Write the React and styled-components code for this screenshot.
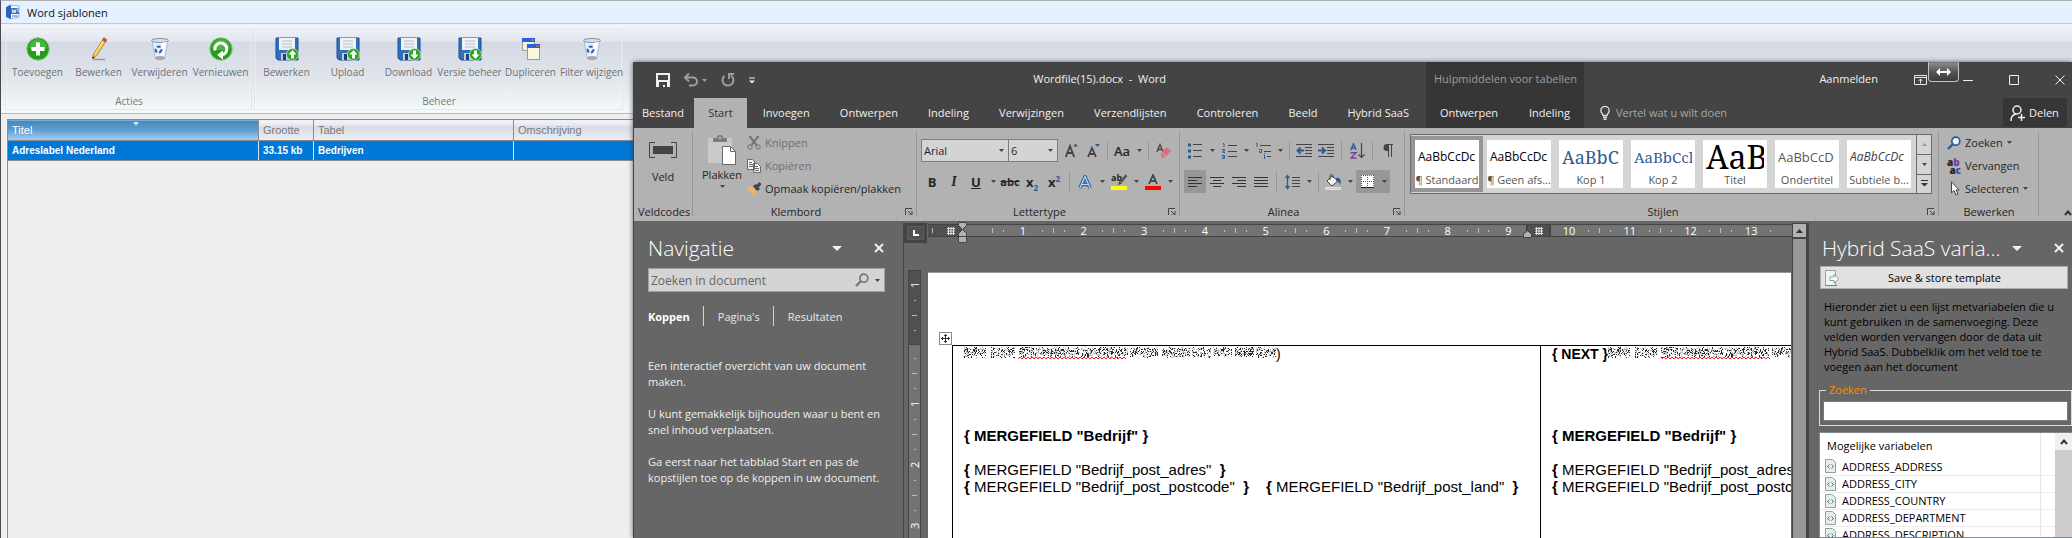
import React from 'react';
import styled, { createGlobalStyle, css } from 'styled-components';

const UI = '"Open Sans", "Noto Sans", sans-serif';
const ARIAL = '"Liberation Sans", Arial, sans-serif';

const Global = createGlobalStyle`
  *, *::before, *::after { box-sizing: border-box; }
  html, body { margin: 0; height: 100%; }
  body { overflow: hidden; background: #efefef; font-family: ${UI}; font-size: 11px; }
  #root { height: 100%; }
  button, input, select { font: inherit; color: inherit; margin: 0; padding: 0; border: 0; background: none; border-radius: 0; }
  p, h1, h2, ul { margin: 0; padding: 0; }
  svg { display: block; flex: none; }
`;

/* ---------- template manager (background application) ---------- */

const Desktop = styled.div`
  position: relative;
  height: 100%;
  overflow: hidden;
`;

const Manager = styled.main`
  display: flex;
  flex-direction: column;
  height: 100%;
  border-left: 1px solid #4a4a4c;
  border-top: 1px solid #b0b0b2;
`;

const ManagerTitle = styled.header`
  display: flex;
  align-items: center;
  gap: 6px;
  height: 23px;
  padding-left: 4px;
  background: #e6f1ff;
  border-bottom: 1px solid #c3c6cb;
  color: #111;
  h1 { font-size: 11px; font-weight: 400; }
`;

const ManagerToolbar = styled.div`
  display: flex;
  gap: 2px;
  height: 90px;
  padding: 5px 4px 3px;
  background: linear-gradient(#f3f4fa 0, #e3e6ee 17px, #d4d9e5 18px, #dfe3ea 50px, #f4faf9 88px);
  border-bottom: 1px solid #b9bcbe;
`;

const ToolGroup = styled.section`
  display: flex;
  flex-direction: column;
  justify-content: space-between;
  padding: 7px 0 0 1px;
  border: 1px solid #e4e5e8;
  box-shadow: inset 0 0 0 1px rgba(255, 255, 255, .25);
  h2 { font-size: 10px; line-height: 16px; font-weight: 400; color: #77797c; text-align: center; }
`;

const ToolRow = styled.div`
  display: flex;
`;

const ToolButton = styled.button`
  display: flex;
  flex-direction: column;
  align-items: center;
  gap: 4px;
  width: 61px;
  font-size: 10px;
  line-height: 14px;
  color: #6f7174;
  white-space: nowrap;
`;

const TemplateTable = styled.table`
  margin: 5px 0 0 6px;
  border-collapse: collapse;
  table-layout: fixed;
  width: 100%;
  font-family: ${ARIAL};
  font-size: 11px;
  text-align: left;
  white-space: nowrap;
  th {
    position: relative;
    height: 21px;
    padding: 0 4px;
    border: 1px solid #8b8b8d;
    background: linear-gradient(#f4f5f8 0, #e6e8ef 5px, #d7dbe5 6px, #eceef0 100%);
    color: #77797c;
    font-weight: 400;
  }
  th[aria-sort] {
    background: linear-gradient(#4586ba, #5f9fd2 50%, #a9d2f6);
    color: #fff;
  }
  td {
    height: 20px;
    padding: 0 4px;
    border: 1px solid #8b8b8d;
    border-right-color: #d8e6f4;
    background: #0078d7;
    color: #fff;
    font-size: 10px;
    font-weight: 700;
  }
`;

const SortMark = styled.span`
  position: absolute;
  left: 50%;
  top: 2px;
  border: 3px solid transparent;
  border-top: 4px solid #c7e4f2;
  border-bottom: 0;
`;

const GridBody = styled.div`
  flex: 1;
  margin-left: 6px;
  border-left: 1px solid #8b8b8d;
`;

/* ---------- word window ---------- */

const WordWindow = styled.div`
  position: absolute;
  left: 633px;
  right: 0;
  top: 62px;
  bottom: 0;
  display: flex;
  flex-direction: column;
  background: #666;
  border-left: 1px solid #444;
  box-shadow: 0 0 5px rgba(40, 44, 60, .75);
`;

const WordHeader = styled.header`
  display: grid;
  grid-template-columns: 792px 158px 1fr;
  height: 66px;
  background: #444;
  color: #f0f0f0;
`;

const HeaderColumn = styled.div`
  display: grid;
  grid-template-rows: 36px 30px;
  grid-template-columns: minmax(0, 1fr);
  background: ${p => (p.$context ? '#363636' : 'none')};
`;

const TitleRow = styled.div`
  position: relative;
  display: flex;
  align-items: center;
  padding: ${p => p.$pad || '0'};
  color: ${p => (p.$muted ? '#9d9d9d' : '#f0f0f0')};
  font-size: 11px;
  white-space: pre;
`;

const QuickAccess = styled.div`
  display: flex;
  align-items: center;
  gap: 14px;
`;

const PlainButton = styled.button`
  display: flex;
  align-items: center;
  gap: 4px;
`;

const DocTitle = styled.h1`
  margin: 0 260px 0 auto;
  padding-bottom: 3px;
  font-size: 11px;
  font-weight: 400;
`;

const SignIn = styled.button`
  margin: 0 36px 0 auto;
  padding-bottom: 3px;
`;

const WindowButtons = styled.div`
  display: flex;
  align-items: center;
  gap: 36px;
  margin-left: 36px;
`;

const DragBadge = styled.span`
  position: absolute;
  left: 344px;
  top: 0;
  display: flex;
  align-items: center;
  justify-content: center;
  width: 31px;
  height: 20px;
  border: 1px solid #c4c4c4;
  border-top-color: #777;
  border-radius: 0 0 4px 4px;
  background: linear-gradient(#8a8a8a, #555 50%, #3c3c3c);
`;

const TabRow = styled.nav`
  display: flex;
  align-items: stretch;
  justify-content: space-between;
  padding: ${p => p.$pad || '0'};
`;

const Tab = styled.button`
  padding: 0 ${p => (p.$file ? 8 : 14)}px 1px;
  background: ${p => (p.$active ? '#b2b2b2' : 'none')};
  color: ${p => (p.$active ? '#333' : '#f0f0f0')};
  white-space: nowrap;
`;

const TellMe = styled.button`
  display: flex;
  align-items: center;
  gap: 6px;
  color: #a8a8a8;
`;

const Share = styled.button`
  display: flex;
  align-items: center;
  gap: 4px;
  width: 64px;
  padding-left: 7px;
  background: #363636;
`;

const Ribbon = styled.div`
  display: flex;
  height: 93px;
  background: #b2b2b2;
  color: #262626;
`;

const groupWidths = { fields: 59, clip: 224, font: 263, para: 225, edit: 100 };

const Group = styled.section`
  position: relative;
  display: flex;
  flex-direction: column;
  flex: ${p => (p.$size ? `0 0 ${groupWidths[p.$size]}px` : '1 1 0')};
  min-width: 0;
  padding: 3px 4px 0;
  &::after {
    content: '';
    position: absolute;
    right: 0;
    top: 4px;
    bottom: 5px;
    width: 1px;
    background: #979797;
  }
`;

const GroupBody = styled.div`
  flex: 1;
  display: flex;
  flex-direction: ${p => (p.$column ? 'column' : 'row')};
`;

const GroupFooter = styled.div`
  display: flex;
  align-items: center;
  height: 18px;
  margin-bottom: 1px;
  h2 {
    flex: 1;
    padding-right: ${p => (p.$launcher ? 10 : 0)}px;
    font-size: 11px;
    font-weight: 400;
    text-align: center;
    white-space: nowrap;
  }
`;

const BigButton = styled.button`
  display: flex;
  flex-direction: column;
  align-items: center;
  gap: ${p => (p.$tall ? 2 : 11)}px;
  padding-top: ${p => (p.$tall ? 4 : 11)}px;
  width: 50px;
  font-size: 11px;
  line-height: 16px;
`;

const ItemList = styled.ul`
  display: flex;
  flex-direction: column;
  list-style: none;
  padding-left: ${p => (p.$inset ? 4 : 0)}px;
`;

const Item = styled.button`
  display: flex;
  align-items: center;
  gap: 4px;
  height: 23px;
  font-size: 11px;
  white-space: nowrap;
  color: ${p => (p.$off ? '#6f6f6f' : '#262626')};
`;

const ToolLine = styled.div`
  display: flex;
  align-items: center;
  height: 23px;
  margin-top: 8px;
`;

const IconButton = styled.button`
  display: flex;
  align-items: center;
  justify-content: center;
  width: ${p => (p.$drop ? 12 : 22)}px;
  height: 23px;
  background: ${p => (p.$on ? '#979797' : 'none')};
`;

const Letter = styled.span`
  font-size: ${p => (p.$large ? 14 : p.$small ? 11 : 13)}px;
  font-weight: ${p => (p.$medium ? 600 : 700)};
  ${p => p.$italic && css`font-style: italic; font-family: "Liberation Serif", serif;`}
  ${p => p.$line && css`text-decoration: ${p.$line};`}
  sub, sup { font-size: 8px; line-height: 0; color: #2a5d94; }
`;

const Sep = styled.span`
  width: 1px;
  height: 20px;
  margin: 0 ${p => (p.$tight ? 3 : 4)}px;
  background: #979797;
`;

const Combo = styled.label`
  position: relative;
  display: flex;
  align-items: center;
  width: ${p => (p.$short ? 50 : 88)}px;
  height: 23px;
  margin-right: ${p => (p.$short ? 2 : -1)}px;
  border: 1px solid #7d7d7d;
  background: #d4d4d4;
  select { appearance: none; width: 100%; height: 100%; padding-left: 2px; font-size: 11px; }
  svg { position: absolute; right: 4px; }
`;

const Gallery = styled.div`
  display: flex;
  flex: 1;
  height: 60px;
  margin: 3px 3px 0 1px;
  border: 1px solid #6b6b6b;
  background: #d4d4d4;
`;

const StyleTiles = styled.div`
  flex: 1;
  display: flex;
  min-width: 0;
  overflow: hidden;
`;

const StyleTile = styled.button`
  flex: none;
  display: flex;
  flex-direction: column;
  width: 72px;
  height: 56px;
  margin-top: 1px;
  border: 4px solid ${p => (p.$on ? '#969696' : 'transparent')};
  background: #fff;
  background-clip: padding-box;
  color: #555;
  font-size: 11px;
  small { font-size: 11px; line-height: 14px; align-self: center; white-space: nowrap; }
`;

const Sample = styled.span`
  display: flex;
  align-items: center;
  height: 33px;
  margin: 0 3px;
  overflow: hidden;
  white-space: nowrap;
  font-family: ${p => (p.$serif ? '"Noto Serif", "DejaVu Serif", "Liberation Serif", serif' : UI)};
  font-size: ${p => p.$px || 12}px;
  font-style: ${p => (p.$italic ? 'italic' : 'normal')};
  color: ${p => p.$color || '#000'};
`;

const GalleryButtons = styled.div`
  display: grid;
  grid-template-rows: 1fr 1fr 1fr;
  width: 15px;
  border-left: 1px solid #6b6b6b;
  button { display: flex; align-items: center; justify-content: center; }
  button + button { border-top: 1px solid #6b6b6b; }
`;

const Collapse = styled.button`
  display: flex;
  align-items: flex-end;
  justify-content: flex-end;
  width: 33px;
  padding-bottom: 5px;
  overflow: hidden;
`;

/* ---------- panes ---------- */

const Workspace = styled.div`
  flex: 1;
  display: flex;
  min-height: 0;
  padding-top: 2px;
`;

const NavPane = styled.aside`
  flex: 0 0 270px;
  padding: 12px 18px 0 14px;
  border-right: 1px solid #444;
  color: #f0f0f0;
`;

const PaneTitle = styled.header`
  display: flex;
  align-items: center;
  height: 26px;
  color: #fff;
  h2 { flex: 1; font-size: 21px; line-height: 26px; font-weight: 300; white-space: nowrap; }
  button { display: flex; justify-content: center; width: 12px; }
  button + button { margin-left: 30px; }
`;

const SearchBox = styled.form`
  display: flex;
  align-items: center;
  gap: 6px;
  height: 24px;
  margin-top: 7px;
  padding: 0 4px 0 2px;
  border: 1px solid #a2a2a2;
  background: #d4d4d4;
  input { flex: 1; min-width: 0; font-size: 12px; outline: 0; color: #666; }
  input::placeholder { color: #666; opacity: 1; }
`;

const NavTabs = styled.div`
  display: flex;
  align-items: center;
  margin-top: 14px;
  height: 20px;
`;

const NavTab = styled.button`
  height: 20px;
  padding: 0 13px 0 ${p => (p.$active ? 0 : 14)}px;
  font-size: 11px;
  font-weight: ${p => (p.$active ? 700 : 400)};
  color: ${p => (p.$active ? '#fff' : '#e8e8e8')};
  & + & { border-left: 1px solid #d4d4d4; }
`;

const NavHelp = styled.div`
  display: flex;
  flex-direction: column;
  gap: 16px;
  margin-top: 32px;
  font-size: 11px;
  line-height: 16px;
  white-space: pre;
`;

const Editor = styled.section`
  flex: 1;
  display: grid;
  grid-template-columns: 24px 1fr;
  grid-template-rows: 20px 1fr;
  min-width: 0;
`;

const RulerCorner = styled.button`
  display: flex;
  align-items: center;
  justify-content: center;
  align-self: start;
  width: 23px;
  height: 20px;
  background: #505050;
  border: 3px solid #444;
  outline: 1px solid #5c5c5c;
  outline-offset: -4px;
`;

const HRuler = styled.div`
  position: relative;
  display: flex;
  align-self: start;
  height: 13px;
  margin-top: 1px;
  border: 1px solid #444;
  border-width: 1px 0;
  background: #737373;
  color: #fff;
`;

const RulerMargin = styled.div`
  display: flex;
  align-items: center;
  justify-content: space-between;
  width: 34px;
  padding: 0 7px 0 4px;
  background: #505050;
`;

const RulerUnits = styled.div`
  flex: 1;
  display: grid;
  grid-template-columns: repeat(13, 1fr);
  padding: 0 11px 0 30px;
`;

const RulerUnit = styled.div`
  display: grid;
  grid-template-columns: 1px 1fr 1px 1fr 18px 1fr 1px 1fr;
  align-items: center;
  font-size: 11px;
  line-height: 11px;
  text-align: center;
`;

const Tick = styled.i`
  width: ${p => (p.$side ? (p.$long ? 5 : 2) : 1)}px;
  height: ${p => (p.$side ? 1 : p.$long ? 5 : 2)}px;
  background: #bdbdbd;
  grid-column: ${p => p.$col || 'auto'};
`;

const RulerNumber = styled.span`
  grid-column: 5;
`;

const ColumnMark = styled.div`
  position: absolute;
  left: 598px;
  top: 0;
  display: flex;
  align-items: center;
  justify-content: center;
  width: 25px;
  height: 11px;
  border: 2px solid #444;
  border-width: 0 2px;
  background: #505050;
`;

const IndentMark = styled.span`
  position: absolute;
  left: ${p => (p.$right ? 595 : 30)}px;
  top: ${p => (p.$right ? 5 : -3)}px;
`;

const VRuler = styled.div`
  justify-self: start;
  width: 13px;
  height: 100%;
  margin: 27px 0 0 4px;
  border: 1px solid #444;
  background: #737373;
  color: #fff;
`;

const VRulerPart = styled.div`
  display: flex;
  flex-direction: column;
  align-items: center;
  padding-top: 6px;
  ${p => p.$dark && css`
    padding-bottom: 6px;
    background: #505050;
    border-bottom: 1px solid #444;
  `}
`;

const VRulerStep = styled.span`
  display: flex;
  align-items: center;
  justify-content: center;
  width: 11px;
  height: ${p => (p.$number ? 16 : 15)}px;
  font-size: 11px;
  line-height: 11px;
  writing-mode: ${p => (p.$number ? 'vertical-rl' : 'horizontal-tb')};
  rotate: ${p => (p.$number ? '180deg' : '0deg')};
`;

const PageArea = styled.div`
  position: relative;
  margin: 29px 1px 0 0;
  min-width: 0;
  overflow: hidden;
  background: #fff;
  border-top: 1px solid #989898;
`;

const MergeTable = styled.table`
  margin: 72px 0 0 24px;
  border-collapse: collapse;
  table-layout: fixed;
  width: 1175px;
  height: 600px;
  color: #000;
  font-family: ${ARIAL};
  font-size: 15px;
  line-height: 17px;
  td {
    padding: 0 0 0 11px;
    border: 1px solid #000;
    vertical-align: top;
    white-space: pre;
  }
`;

const MoveHandle = styled.button`
  position: absolute;
  left: 11px;
  top: 59px;
  display: flex;
  align-items: center;
  justify-content: center;
  width: 13px;
  height: 13px;
  border: 1px solid #8a8a8a;
  background: #fff;
`;

const CodeLine = styled.p`
  display: flex;
  align-items: flex-start;
  gap: ${p => (p.$split ? 17 : 0)}px;
  height: 17px;
  margin-bottom: ${p => (p.$after || 0)}px;
  font-weight: ${p => (p.$bold ? 700 : 400)};
  font-size: ${p => (p.$code ? 14 : 15)}px;
`;

const VScroll = styled.div`
  flex: 0 0 16px;
  display: flex;
  flex-direction: column;
  border: 1px solid #444;
  border-width: 1px 2px 0 1px;
  background: #979797;
  button {
    display: flex;
    align-items: center;
    justify-content: center;
    height: 15px;
    background: #b2b2b2;
    border-bottom: 2px solid #444;
  }
`;

const VarPane = styled.aside`
  flex: 0 0 264px;
  display: flex;
  flex-direction: column;
  padding: 12px 0 0 10px;
  border-left: 1px solid #444;
`;

const VarTitle = styled(PaneTitle)`
  padding: 0 7px 0 3px;
`;

const SaveButton = styled.button`
  display: flex;
  align-items: center;
  height: 23px;
  margin: 5px 4px 0 1px;
  padding-left: 3px;
  border: 1px solid #adadad;
  background: #e1e1e1;
  color: #000;
  font-size: 11px;
  span { flex: 1; padding-right: 17px; text-align: center; }
`;

const VarText = styled.p`
  margin: 10px 0 0 5px;
  color: #000;
  font-size: 11px;
  line-height: 15px;
  white-space: pre;
`;

const SearchSet = styled.fieldset`
  height: 43px;
  margin: 9px 0 0;
  padding: 4px 3px 0;
  border: 1px solid #dcdcdc;
  min-width: 0;
  legend { margin-left: 3px; padding: 0 3px; color: #ff8c00; font-size: 11px; line-height: 14px; }
  input { display: block; width: 100%; height: 20px; border: 1px solid #7a7a7a; background: #fff; }
`;

const VarList = styled.div`
  flex: 1;
  display: flex;
  min-height: 0;
  margin-top: 6px;
  overflow: hidden;
  border: 1px solid #828790;
  border-right: 0;
  background: #fff;
  color: #000;
`;

const VarTable = styled.table`
  flex: 1;
  align-self: flex-start;
  border-collapse: collapse;
  table-layout: fixed;
  text-align: left;
  font-size: 11px;
  th { height: 25px; padding: 0 7px; font-weight: 400; }
  td { height: 17px; padding: 0 5px; border-bottom: 1px solid #ececec; }
  th:first-child, td:first-child { width: 222px; border-right: 1px solid #e5e5e5; }
`;

const VarName = styled.span`
  display: flex;
  align-items: center;
  gap: 6px;
  height: 16px;
`;

const ListScroll = styled.div`
  flex: 0 0 17px;
  background: #cdcdcd;
  button { display: flex; align-items: center; justify-content: center; width: 17px; height: 17px; background: #f0f0f0; }
`;

/* ---------- drawings ---------- */

const Svg = ({ w, h = w, children, ...rest }) => (
  <svg width={w} height={h} viewBox={`0 0 ${w} ${h}`} fill="none" aria-hidden="true" {...rest}>{children}</svg>
);

const Caret = ({ color = '#444', big }) => big
  ? <Svg w={10} h={5}><path d="M0 0h10L5 5z" fill={color} /></Svg>
  : <Svg w={5} h={3}><path d="M0 0h5L2.5 3z" fill={color} /></Svg>;

const WordIcon = () => (
  <Svg w={16}>
    <path d="M4 1l10 1v11l-10 2z" fill="#fafcff" stroke="#9fb6dd" />
    <path d="M1 3l5-2v14l-5-2z" fill="#2a63b8" />
    <path d="M6 4h8v6H6z" fill="#3c71c4" />
    <path d="M7 5l1 4 1-3 1 3 1-4M12 5h2M12 7h2" stroke="#fff" strokeWidth=".8" />
    <path d="M7 12h6" stroke="#3c71c4" />
  </Svg>
);

const Orb = ({ children }) => (
  <Svg w={24}>
    <circle cx="12" cy="12" r="11.2" fill="#249b1b" stroke="#8cc487" />
    <path d="M3 11a9 9 0 0 1 18 0c-5 3-13 3-18 0z" fill="#6cc85f" opacity=".55" />
    {children}
  </Svg>
);
const AddIcon = () => <Orb><path d="M12 5.500v13M5.500 12h13" stroke="#fff" strokeWidth="4" /></Orb>;
const RefreshIcon = () => (
  <Orb>
    <path d="M6 13.500a6 6 0 1 1 7.500 4.300" stroke="#fff" strokeWidth="3" />
    <path d="M14 13.500v9l-6-4.500z" fill="#fff" />
  </Orb>
);
const PencilIcon = () => (
  <Svg w={24}>
    <path d="M6 22.500h12" stroke="#999" strokeWidth="1.500" />
    <path d="M5.500 21.500l1-4.500L15.500 3l3 2-9 14z" fill="#f5c93a" stroke="#a9812a" strokeWidth=".8" />
    <path d="M8 17l8.300-13" stroke="#fff0a0" />
    <path d="M15.500 3l1.300-2.300 3 2L18.500 5z" fill="#c8574a" stroke="#8d3a33" strokeWidth=".6" />
    <path d="M5.300 22l.5-2.500 2 1z" fill="#222" />
  </Svg>
);
const BinIcon = () => (
  <Svg w={24}>
    <path d="M4 3h16l-3 17c-1 3-9 3-10 0z" fill="#e9f0f8" stroke="#b3c0cd" />
    <ellipse cx="12" cy="3.500" rx="8.500" ry="2" fill="#d6dfe8" stroke="#8796a6" />
    <path d="M14 6l4-1-3 15-3 1z" fill="#fff" />
    <ellipse cx="12" cy="21" rx="5" ry="2" fill="#a8a8a8" />
    <circle cx="10.500" cy="12.500" r="3" stroke="#2c5fc9" strokeWidth="2" strokeDasharray="4 2" />
  </Svg>
);
const DiskIcon = ({ down }) => (
  <Svg w={24}>
    <path d="M1 1h22v22H3l-2-2z" fill="#2f6fbe" stroke="#1d4d91" />
    <path d="M4 1h16v12H4z" fill="#f0f3f6" />
    <path d="M7 4h10M7 7h10M7 10h10" stroke="#b4bcc6" />
    <path d="M6 16h11v7H6z" fill="#c4ccd4" />
    <path d="M8 17h3v6H8z" fill="#1f3f73" />
    <circle cx="17.500" cy="17.500" r="6" fill="#2fa324" stroke="#d8ecd5" strokeWidth=".7" />
    <path d={down ? 'M16 13.500h3v4h2.500l-4 4.500-4-4.500H16z' : 'M16 21.500h3v-4h2.500l-4-4.500-4 4.500H16z'} fill="#fff" />
  </Svg>
);
const CopyIcon = () => (
  <Svg w={24}>
    <path d="M3.500 1.500h12v12h-12z" fill="#f3f0df" stroke="#9c9c94" />
    <path d="M3 1h13v4H3z" fill="#2463d6" />
    <path d="M8.500 8.500h12v14h-12z" fill="#fbf6e2" stroke="#9c9c94" />
    <path d="M8 7h13v4H8z" fill="#2463d6" />
    <path d="M12 3h3M17 9h3" stroke="#e8604c" strokeWidth="1.500" />
  </Svg>
);

const SaveIcon = () => (
  <Svg w={14}><path d="M0 0h14v14H0z" fill="#f0f0f0" /><path d="M2 2h10v5H2zM3 9h8v5H9v-2H7v2H3z" fill="#444" /></Svg>
);
const UndoIcon = () => (
  <Svg w={14}><path d="M1 4.500h8a4 4 0 0 1 0 8H5M5 .5l-4 4 4 4" stroke="#9d9d9d" strokeWidth="2" /></Svg>
);
const RedoIcon = () => (
  <Svg w={14}><path d="M10 2.500A5.500 5.500 0 1 1 3.500 2.800M8 6V1h5" stroke="#9d9d9d" strokeWidth="2" /></Svg>
);
const CustomizeIcon = () => (
  <Svg w={6} h={7}><path d="M0 1h6" stroke="#f0f0f0" /><path d="M0 3.500h6L3 6.500z" fill="#f0f0f0" /></Svg>
);
const RibbonIcon = () => (
  <Svg w={13} h={10}><path d="M.5.5h12v9H.5zM.5 2.500h12M6.500 8.500V4M4.500 6l2-2 2 2" stroke="#e6e6e6" /></Svg>
);
const SwapIcon = () => (
  <Svg w={15} h={8}><path d="M4 0v3h7V0l4 4-4 4V5H4v3L0 4z" fill="#fff" /></Svg>
);
const MinIcon = () => <Svg w={10}><path d="M0 5.500h10" stroke="#f0f0f0" /></Svg>;
const MaxIcon = () => <Svg w={10}><path d="M.5.5h9v9h-9z" stroke="#f0f0f0" /></Svg>;
const CloseIcon = () => <Svg w={10}><path d="M.5.5l9 9M9.500.5l-9 9" stroke="#f0f0f0" /></Svg>;
const PaneClose = () => <Svg w={10}><path d="M1 1l8 8M9 1l-8 8" stroke="#f0f0f0" strokeWidth="2" /></Svg>;
const BulbIcon = () => (
  <Svg w={10} h={14}><path d="M3 9.500C3 8 .8 7 .8 4.600a4.200 4.200 0 0 1 8.400 0C9.200 7 7 8 7 9.500zM3 11.500h4M3.500 13.500h3" stroke="#e6e6e6" strokeWidth="1.300" /></Svg>
);
const ShareIcon = () => (
  <Svg w={15} h={16}><circle cx="7" cy="5" r="4" stroke="#f0f0f0" strokeWidth="1.500" /><path d="M1 16c0-4 2-6.500 5-7M8 12.500h7M11.500 9v7" stroke="#f0f0f0" strokeWidth="1.500" /></Svg>
);
const FieldIcon = () => (
  <Svg w={28} h={16}><path d="M6 .5H.5v15H6M22 .5h5.500v15H22" stroke="#444" /><path d="M4 4h20v8H4z" fill="#444" /></Svg>
);
const PasteIcon = () => (
  <Svg w={28} h={30}>
    <path d="M0 3h24v25H0z" fill="#cacaca" />
    <path d="M5 3h4a3 3 0 0 1 6 0h4v4H5z" fill="#7b7b7b" /><circle cx="12" cy="3" r="1.200" fill="#b2b2b2" />
    <path d="M14.500 11.500h8l5 5v13h-13z" fill="#fff" stroke="#6a6a6a" /><path d="M22.500 11.500v5h5" stroke="#6a6a6a" />
  </Svg>
);
const CutIcon = () => (
  <Svg w={14}><path d="M2.500 0L9.500 9M11.500 0L4.500 9" stroke="#6f6f6f" strokeWidth="2" /><circle cx="3" cy="11" r="2.200" stroke="#6f6f6f" /><circle cx="11" cy="11" r="2.200" stroke="#6f6f6f" /></Svg>
);
const PagesIcon = () => (
  <Svg w={14}>
    <path d="M.5.5h5l2 2v8h-7zM6.500 4.500h4l3 3v6h-7z" fill="#f2f2f2" stroke="#6a6a6a" />
    <path d="M2 3.500h3M2 5.500h4M2 7.500h4M8 7.500h3M8 9.500h4M8 11.500h4" stroke="#6a6a6a" />
  </Svg>
);
const BrushIcon = () => (
  <Svg w={14}><path d="M0 7l4-3 6 6-3 4z" fill="#e8b866" /><path d="M6 4l4 5 3-2-4-5z" fill="#444" /><path d="M10 5l3.500-4" stroke="#444" strokeWidth="3" /></Svg>
);
const Launcher = () => (
  <Svg w={8} h={7}><path d="M.5 7V.5H7" stroke="#444" /><path d="M3 3l4 4M7 3v4H3" stroke="#444" /></Svg>
);
const GrowA = ({ down }) => (
  <Svg w={13} h={15}>
    <path d={down ? 'M1 14L5 5l4 9M2.500 11h5' : 'M.8 14L5 3l4.200 11M2.500 10h5'} stroke="#444" strokeWidth="1.800" />
    <path d={down ? 'M8 1h5l-2.500 3z' : 'M8 3.500h5L10.500.5z'} fill="#2a5d94" />
  </Svg>
);
const EraserIcon = () => (
  <Svg w={15} h={16}><path d="M.8 9L4 1.500 7.200 9M2 6.500h4" stroke="#444" strokeWidth="1.300" /><path d="M6 9l5-5 4 4-5 5z" fill="#e06a80" /><path d="M4.500 11l1-1 3.500 3.500-1.500 1.500h-1z" fill="#e06a80" /></Svg>
);
const EffectA = () => (
  <Svg w={14} h={14}><path d="M2 13L7 1.500 12 13M4 9.500h6" stroke="#2a68ad" strokeWidth="3.500" /><path d="M2 13L7 1.500 12 13M4 9.500h6" stroke="#c8d6e6" strokeWidth="1.200" /></Svg>
);
const ColorA = () => (
  <Svg w={16}><path d="M4 10L8 1l4 9M5.500 7h5" stroke="#444" strokeWidth="1.800" /><path d="M0 12h16v4H0z" fill="red" /></Svg>
);
const Highlighter = styled.span`
  position: relative;
  width: 16px;
  height: 16px;
  border-bottom: 4px solid #ff0;
  font-size: 9px;
  line-height: 8px;
  font-weight: 700;
  text-align: left;
  svg { position: absolute; right: 0; top: 0; }
`;
const PenIcon = () => <Svg w={10} h={11}><path d="M9.500 1L4 8" stroke="#555" strokeWidth="2.500" /><path d="M1 11l1.500-4L5 9.500z" fill="#444" /></Svg>;

const lineSets = {
  left: [[0, 14], [0, 9], [0, 14], [0, 9]],
  center: [[0, 14], [3, 11], [0, 14], [3, 11]],
  right: [[0, 14], [5, 14], [0, 14], [5, 14]],
  full: [[0, 14], [0, 14], [0, 14], [0, 14]],
};
const AlignIcon = ({ kind }) => (
  <Svg w={14} h={11}>{lineSets[kind].map(([a, b], i) => <path key={i} d={`M${a} ${i * 3 + 1}.5H${b}`} stroke="#333" />)}</Svg>
);
const BulletIcon = () => (
  <Svg w={14} h={16}>{[2, 8, 14].map(y => <g key={y}><rect x="0" y={y - 1.5} width="3" height="3" fill="#2a5d94" /><path d={`M5 ${y - 0.5}h9`} stroke="#444" /></g>)}</Svg>
);
const NumberIcon = () => (
  <Svg w={15} h={16}>
    <path d="M1 .5h1V4M0 6.500h2.500v1.500H1v1.500h2M0 12.500h2.500v3H0M0 14h2" stroke="#2a5d94" /><path d="M6 2.500h9M6 8.500h9M6 13.500h9" stroke="#444" />
  </Svg>
);
const LevelIcon = () => (
  <Svg w={16}><path d="M1 .5h1V4M4 6.500h2.500v3H4.500V8M9.500 12v4M9.500 10v1" stroke="#2a5d94" /><path d="M5 2.500h11M9 8.500h7M12 13.500h4" stroke="#444" /></Svg>
);
const IndentIcon = ({ out }) => (
  <Svg w={16} h={13}>
    <path d="M0 .5h16M9 3.500h7M9 6.500h7M9 9.500h7M0 12.500h16" stroke="#444" />
    <path d={out ? 'M8 6.500H2M4.500 3.500l-3 3 3 3' : 'M0 6.500h6M4 3.500l3 3-3 3'} stroke="#2a5d94" strokeWidth="2" />
  </Svg>
);
const SortIcon = () => (
  <Svg w={15} h={16}><path d="M.8 7L3.500.8 6.200 7M2 5h3" stroke="#2a5d94" strokeWidth="1.400" /><path d="M.5 9.700H6L1 15h5.500" stroke="#7c3fa0" strokeWidth="1.400" /><path d="M11.500 0v14M8.500 11.500l3 3 3-3" stroke="#444" strokeWidth="1.200" /></Svg>
);
const PilcrowIcon = () => (
  <Svg w={10} h={13}><path d="M4 7a3.500 3.500 0 0 1 0-7h6v1H9v12H8V1H6v12H5V7z" fill="#444" /></Svg>
);
const SpacingIcon = () => (
  <Svg w={15} h={16}><path d="M2.500 1v14M.5 4l2-2.500 2 2.500M.5 12l2 2.500 2-2.500" stroke="#2a5d94" strokeWidth="1.300" /><path d="M7 3.500h8M7 6.500h8M7 9.500h8M7 12.500h8" stroke="#444" /></Svg>
);
const BucketIcon = () => (
  <Svg w={17} h={16}>
    <path d="M2 7l5-5 6 5-6 5z" fill="#f4f4f4" stroke="#444" /><path d="M5 6V2a1.500 1.500 0 0 1 3 0v2" stroke="#444" /><path d="M11 4c4-1 6 2 4 7-1-3-2-4-4-4z" fill="#2a5d94" /><path d="M.5 13.500h15v2H.5z" fill="#cfcfcf" stroke="#e2e2e2" />
  </Svg>
);
const BorderIcon = () => (
  <Svg w={13}><path d="M0 0h13v13H0z" fill="#fff" /><path d="M.5 0v12M6.500 0v12M12.500 0v12M0 .5h13M0 6.500h13" stroke="#555" strokeDasharray="1 1" /><path d="M0 12.500h13" stroke="#222" /></Svg>
);
const Glass = ({ size = 14, color = '#2a5d94', fill = 'none' }) => (
  <svg width={size} height={size} viewBox="0 0 14 14" fill="none" aria-hidden="true"><circle cx="8.800" cy="5.200" r="4" stroke={color} strokeWidth="1.700" fill={fill} /><path d="M6 8l-5 5" stroke={color} strokeWidth="2.400" /></svg>
);
const ReplaceIcon = styled.span`
  display: flex;
  flex-direction: column;
  width: 14px;
  font-size: 10px;
  line-height: 8px;
  font-weight: 700;
  em { font-style: normal; color: #7c3fa0; }
  b { text-align: left; }
  b:last-child { text-align: right; }
  b:last-child em { color: #2a5d94; }
`;
const CursorIcon = () => (
  <Svg w={14} h={15}><path d="M4.500.8v11l2.500-2.300 2 4.500 2-1-2-4h3.200z" fill="#fff" stroke="#444" /></Svg>
);
const ChevronUp = ({ w = 8 }) => <Svg w={w} h={6}><path d="M1 5l3-3.500L7 5" stroke="#333" strokeWidth="2" /></Svg>;
const HashIcon = () => <Svg w={8}><path d="M1.500 0v8M4 0v8M6.500 0v8M0 1.500h8M0 4h8M0 6.500h8" stroke="#e0e0e0" /></Svg>;
const TabStop = () => <Svg w={6}><path d="M1 0v5h5" stroke="#fff" strokeWidth="2" /></Svg>;
const IndentStack = () => (
  <Svg w={9} h={21}>
    <path d="M.5.5h8v3l-4 4-4-4zM4.500 7.500l4 4v3h-8v-3zM.5 14.500h8v6h-8z" fill="#b2b2b2" stroke="#444" />
  </Svg>
);
const IndentSingle = () => <Svg w={9} h={8}><path d="M4.500.7l4 3.300v3.500h-8V4z" fill="#b2b2b2" stroke="#444" /></Svg>;
const MoveIcon = () => (
  <Svg w={9}><path d="M4.500 0v9M0 4.500h9M3 1.500h3M3 7.500h3M1.500 3v3M7.500 3v3" stroke="#333" /></Svg>
);
const ExportIcon = () => (
  <Svg w={15} h={16}><path d="M1.500.5h10v15h-10z" fill="#eef6f3" stroke="#8fa6a3" /><path d="M1 15.500h12" stroke="#6d8582" /><path d="M6 7h4V4.500L14.500 9 10 13v-2.500H6z" fill="#fff" stroke="#6d8f89" strokeWidth=".8" /></Svg>
);
const VarIcon = () => (
  <Svg w={11} h={14}><path d="M.5.5h7l3 3v10H.5z" fill="#e6eeec" stroke="#8fa39f" /><path d="M4.500 5.500l-2 2 2 2M6.500 5.500l2 2-2 2" stroke="#4d6964" /></Svg>
);

/* Corrupted header line: speckled word blocks produced from a small seeded generator. */
const speckle = (words, seed, density) => {
  let s = seed;
  const next = () => { s = (s * 16807) % 2147483647; return s / 2147483647; };
  let d = '';
  words.forEach(([from, to]) => {
    for (let x = from; x < to; x++) {
      const top = 1 + Math.floor(next() * 3);
      const end = 9 + Math.floor(next() * 4);
      for (let y = top; y < end; y++) if (next() < density) d += `M${x} ${y}.5h1`;
    }
  });
  return d;
};
const lineWords = [[0, 22], [27, 51], [55, 164], [166, 194], [198, 226], [228, 247], [249, 268], [271, 290], [292, 312]];
const shortWords = [[0, 22], [27, 49], [53, 161], [164, 191], [193, 220]];
const GarbledText = ({ words, wave, width }) => (
  <svg width={width} height="16" viewBox={`0 0 ${width} 16`} fill="none" aria-hidden="true">
    <path d={speckle(words, 77, 0.36)} stroke="#bbb" />
    <path d={speckle(words, 4211, 0.27)} stroke="#2c2c2c" />
    <path d={Array.from({ length: Math.floor((wave[1] - wave[0]) / 4) }, (_, i) => `M${wave[0] + i * 4} 13l2-2 2 2`).join('')} stroke="#f22" />
  </svg>
);

/* ---------- content ---------- */

const actions = [['Toevoegen', AddIcon], ['Bewerken', PencilIcon], ['Verwijderen', BinIcon], ['Vernieuwen', RefreshIcon]];
const manage = [['Bewerken', DiskIcon], ['Upload', DiskIcon], ['Download', DiskIcon, true], ['Versie beheer', DiskIcon, true], ['Dupliceren', CopyIcon], ['Filter wijzigen', BinIcon]];
const tabs = ['Invoegen', 'Ontwerpen', 'Indeling', 'Verwijzingen', 'Verzendlijsten', 'Controleren', 'Beeld', 'Hybrid SaaS'];
const styleTiles = [
  { text: 'AaBbCcDc', name: '¶ Standaard', on: true },
  { text: 'AaBbCcDc', name: '¶ Geen afs...' },
  { text: 'AaBbC', name: 'Kop 1', px: 18, color: '#2f5b93', serif: true },
  { text: 'AaBbCcl', name: 'Kop 2', px: 15, color: '#2f5b93', serif: true },
  { text: 'AaB', name: 'Titel', px: 32, serif: true },
  { text: 'AaBbCcD', name: 'Ondertitel', px: 13, color: '#5a5a5a' },
  { text: 'AaBbCcDc', name: 'Subtiele b...', italic: true, color: '#404040' },
];
const variables = ['ADDRESS_ADDRESS', 'ADDRESS_CITY', 'ADDRESS_COUNTRY', 'ADDRESS_DEPARTMENT', 'ADDRESS_DESCRIPTION'];

const ToolSet = ({ title, items }) => (
  <ToolGroup>
    <ToolRow>
      {items.map(([label, Icon, down], i) => <ToolButton key={i}><Icon down={down} />{label}</ToolButton>)}
    </ToolRow>
    <h2>{title}</h2>
  </ToolGroup>
);

const Drop = ({ on, label = 'Meer opties' }) => <IconButton $drop $on={on} aria-label={label}><Caret /></IconButton>;

const RibbonGroup = ({ size, title, launcher, column, children }) => (
  <Group $size={size}>
    <GroupBody $column={column}>{children}</GroupBody>
    <GroupFooter $launcher={launcher}>
      <h2>{title}</h2>
      {launcher && <PlainButton aria-label={`${title} instellingen`}><Launcher /></PlainButton>}
    </GroupFooter>
  </Group>
);

const Field = ({ name }) => <span><b>{'{ '}</b>{`MERGEFIELD "${name}"  `}<b>{'}'}</b></span>;

const CellLines = () => (
  <>
    <CodeLine $bold $after={17}>{'{ MERGEFIELD "Bedrijf" }'}</CodeLine>
    <CodeLine><Field name="Bedrijf_post_adres" /></CodeLine>
    <CodeLine $split><Field name="Bedrijf_post_postcode" /><Field name="Bedrijf_post_land" /></CodeLine>
  </>
);

const MainWindow = () => (
  <Manager>
    <ManagerTitle><WordIcon /><h1>Word sjablonen</h1></ManagerTitle>
    <ManagerToolbar>
      <ToolSet title="Acties" items={actions} />
      <ToolSet title="Beheer" items={manage} />
    </ManagerToolbar>
    <TemplateTable>
      <colgroup><col width="251" /><col width="55" /><col width="200" /><col /></colgroup>
      <thead><tr><th aria-sort="ascending">Titel<SortMark /></th><th>Grootte</th><th>Tabel</th><th>Omschrijving</th></tr></thead>
      <tbody><tr><td>Adreslabel Nederland</td><td>33.15 kb</td><td>Bedrijven</td><td /></tr></tbody>
    </TemplateTable>
    <GridBody />
  </Manager>
);

const Header = () => (
  <WordHeader>
    <HeaderColumn>
      <TitleRow $pad="0 0 0 22px">
        <QuickAccess>
          <PlainButton aria-label="Opslaan"><SaveIcon /></PlainButton>
          <PlainButton aria-label="Ongedaan maken"><UndoIcon /><Caret color="#9d9d9d" /></PlainButton>
          <PlainButton aria-label="Opnieuw"><RedoIcon /></PlainButton>
          <PlainButton aria-label="Aanpassen"><CustomizeIcon /></PlainButton>
        </QuickAccess>
        <DocTitle>{'Wordfile(15).docx  -  Word'}</DocTitle>
      </TitleRow>
      <TabRow $pad="0 3px 0 0">
        <Tab $file>Bestand</Tab>
        <Tab $active>Start</Tab>
        {tabs.map(t => <Tab key={t}>{t}</Tab>)}
      </TabRow>
    </HeaderColumn>
    <HeaderColumn $context>
      <TitleRow $muted $pad="0 0 3px 8px">Hulpmiddelen voor tabellen</TitleRow>
      <TabRow><Tab>Ontwerpen</Tab><Tab>Indeling</Tab></TabRow>
    </HeaderColumn>
    <HeaderColumn>
      <TitleRow $pad="0 7px 0 0">
        <SignIn>Aanmelden</SignIn>
        <PlainButton aria-label="Lintweergave"><RibbonIcon /></PlainButton>
        <WindowButtons>
          <PlainButton aria-label="Minimaliseren"><MinIcon /></PlainButton>
          <PlainButton aria-label="Maximaliseren"><MaxIcon /></PlainButton>
          <PlainButton aria-label="Sluiten"><CloseIcon /></PlainButton>
        </WindowButtons>
        <DragBadge><SwapIcon /></DragBadge>
      </TitleRow>
      <TabRow $pad="0 5px 1px 16px">
        <TellMe><BulbIcon />Vertel wat u wilt doen</TellMe>
        <Share><ShareIcon />Delen</Share>
      </TabRow>
    </HeaderColumn>
  </WordHeader>
);

const RibbonBar = () => (
  <Ribbon>
    <RibbonGroup size="fields" title="Veldcodes">
      <BigButton><FieldIcon />Veld</BigButton>
    </RibbonGroup>
    <RibbonGroup size="clip" title="Klembord" launcher>
      <BigButton $tall><PasteIcon />Plakken<Caret /></BigButton>
      <ItemList>
        <li><Item $off><CutIcon />Knippen</Item></li>
        <li><Item $off><PagesIcon />Kopiëren</Item></li>
        <li><Item><BrushIcon />Opmaak kopiëren/plakken</Item></li>
      </ItemList>
    </RibbonGroup>
    <RibbonGroup size="font" title="Lettertype" launcher column>
      <ToolLine>
        <Combo><select aria-label="Lettertype" defaultValue="Arial"><option>Arial</option></select><Caret /></Combo>
        <Combo $short><select aria-label="Tekengrootte" defaultValue="6"><option>6</option></select><Caret /></Combo>
        <IconButton aria-label="Groter"><GrowA /></IconButton>
        <IconButton aria-label="Kleiner"><GrowA down /></IconButton>
        <Sep $tight />
        <IconButton><Letter $medium>Aa</Letter></IconButton><Drop />
        <Sep $tight />
        <IconButton aria-label="Opmaak wissen"><EraserIcon /></IconButton>
      </ToolLine>
      <ToolLine>
        <IconButton><Letter>B</Letter></IconButton>
        <IconButton><Letter $large $italic>I</Letter></IconButton>
        <IconButton><Letter $line="underline">U</Letter></IconButton><Drop />
        <IconButton><Letter $small $line="line-through">abc</Letter></IconButton>
        <IconButton><Letter>x<sub>2</sub></Letter></IconButton>
        <IconButton><Letter>x<sup>2</sup></Letter></IconButton>
        <Sep />
        <IconButton aria-label="Teksteffecten"><EffectA /></IconButton><Drop />
        <IconButton aria-label="Markeren"><Highlighter>ab<PenIcon /></Highlighter></IconButton><Drop />
        <IconButton aria-label="Tekstkleur"><ColorA /></IconButton><Drop />
      </ToolLine>
    </RibbonGroup>
    <RibbonGroup size="para" title="Alinea" launcher column>
      <ToolLine>
        <IconButton aria-label="Opsommingstekens"><BulletIcon /></IconButton><Drop />
        <IconButton aria-label="Nummering"><NumberIcon /></IconButton><Drop />
        <IconButton aria-label="Lijst met meerdere niveaus"><LevelIcon /></IconButton><Drop />
        <Sep $tight />
        <IconButton aria-label="Inspringing verkleinen"><IndentIcon out /></IconButton>
        <IconButton aria-label="Inspringing vergroten"><IndentIcon /></IconButton>
        <Sep />
        <IconButton aria-label="Sorteren"><SortIcon /></IconButton>
        <Sep />
        <IconButton aria-label="Alles weergeven"><PilcrowIcon /></IconButton>
      </ToolLine>
      <ToolLine>
        <IconButton $on aria-label="Links uitlijnen"><AlignIcon kind="left" /></IconButton>
        <IconButton aria-label="Centreren"><AlignIcon kind="center" /></IconButton>
        <IconButton aria-label="Rechts uitlijnen"><AlignIcon kind="right" /></IconButton>
        <IconButton aria-label="Uitvullen"><AlignIcon kind="full" /></IconButton>
        <Sep />
        <IconButton aria-label="Regelafstand"><SpacingIcon /></IconButton><Drop />
        <Sep $tight />
        <IconButton aria-label="Arcering"><BucketIcon /></IconButton><Drop />
        <IconButton $on aria-label="Randen"><BorderIcon /></IconButton><Drop on />
      </ToolLine>
    </RibbonGroup>
    <RibbonGroup title="Stijlen" launcher>
      <Gallery>
        <StyleTiles>
          {styleTiles.map(t => (
            <StyleTile key={t.name} $on={t.on}>
              <Sample $px={t.px} $serif={t.serif} $italic={t.italic} $color={t.color}>{t.text}</Sample>
              <small>{t.name}</small>
            </StyleTile>
          ))}
        </StyleTiles>
        <GalleryButtons>
          <button aria-label="Omhoog"><Svg w={5} h={3}><path d="M0 3h5L2.500 0z" fill="#999" /></Svg></button>
          <button aria-label="Omlaag"><Caret /></button>
          <button aria-label="Meer stijlen"><Svg w={7}><path d="M0 .5h7" stroke="#333" /><path d="M0 3h7L3.500 6.500z" fill="#333" /></Svg></button>
        </GalleryButtons>
      </Gallery>
    </RibbonGroup>
    <RibbonGroup size="edit" title="Bewerken">
      <ItemList $inset>
        <li><Item><Glass fill="#e8f0f8" />Zoeken<Caret /></Item></li>
        <li><Item><ReplaceIcon><b>a<em>b</em></b><b>a<em>c</em></b></ReplaceIcon>Vervangen</Item></li>
        <li><Item><CursorIcon />Selecteren<Caret /></Item></li>
      </ItemList>
    </RibbonGroup>
    <Collapse aria-label="Lint samenvouwen"><ChevronUp /></Collapse>
  </Ribbon>
);

const Step = ({ n, long }) => <VRulerStep $number={n}>{n || <Tick $side $long={long} />}</VRulerStep>;

const Document = () => (
  <>
    <Editor>
      <RulerCorner aria-label="Tabstop"><TabStop /></RulerCorner>
      <HRuler>
        <RulerMargin><Tick $long /><HashIcon /></RulerMargin>
        <RulerUnits>
          {Array.from({ length: 13 }, (_, i) => (
            <RulerUnit key={i}><Tick $long $col={1} /><Tick $col={3} /><RulerNumber>{i + 1}</RulerNumber><Tick $col={7} /></RulerUnit>
          ))}
        </RulerUnits>
        <ColumnMark><HashIcon /></ColumnMark>
        <IndentMark><IndentStack /></IndentMark>
        <IndentMark $right><IndentSingle /></IndentMark>
      </HRuler>
      <VRuler>
        <VRulerPart $dark><Step n="1" /><Step /><Step long /><Step /></VRulerPart>
        <VRulerPart>
          <Step /><Step long /><Step /><Step n="1" /><Step /><Step long /><Step /><Step n="2" /><Step /><Step long /><Step /><Step n="3" />
        </VRulerPart>
      </VRuler>
      <PageArea>
        <MergeTable>
          <colgroup><col width="588" /><col width="587" /></colgroup>
          <tbody>
            <tr>
              <td>
                <CodeLine $code $after={64}><GarbledText words={lineWords} wave={[54, 164]} width={312} />)</CodeLine>
                <CellLines />
              </td>
              <td>
                <CodeLine $code $bold $after={64}>{'{ NEXT }'}<GarbledText words={shortWords} wave={[54, 162]} width={220} /></CodeLine>
                <CellLines />
              </td>
            </tr>
          </tbody>
        </MergeTable>
        <MoveHandle aria-label="Tabel verplaatsen"><MoveIcon /></MoveHandle>
      </PageArea>
    </Editor>
    <VScroll><button aria-label="Omhoog schuiven"><Svg w={7} h={4}><path d="M0 4h7L3.500 0z" fill="#333" /></Svg></button></VScroll>
  </>
);

const Navigation = () => (
  <NavPane>
    <PaneTitle>
      <h2>Navigatie</h2>
      <button aria-label="Taakvensteropties"><Caret big color="#f0f0f0" /></button>
      <button aria-label="Sluiten"><PaneClose /></button>
    </PaneTitle>
    <SearchBox>
      <input aria-label="Zoeken in document" placeholder="Zoeken in document" />
      <Glass color="#777" /><Caret />
    </SearchBox>
    <NavTabs><NavTab $active>Koppen</NavTab><NavTab>Pagina's</NavTab><NavTab>Resultaten</NavTab></NavTabs>
    <NavHelp>
      <p>{'Een interactief overzicht van uw document\nmaken.'}</p>
      <p>{'U kunt gemakkelijk bijhouden waar u bent en\nsnel inhoud verplaatsen.'}</p>
      <p>{'Ga eerst naar het tabblad Start en pas de\nkopstijlen toe op de koppen in uw document.'}</p>
    </NavHelp>
  </NavPane>
);

const Variables = () => (
  <VarPane>
    <VarTitle>
      <h2>Hybrid SaaS varia...</h2>
      <button aria-label="Taakvensteropties"><Caret big color="#f0f0f0" /></button>
      <button aria-label="Sluiten"><PaneClose /></button>
    </VarTitle>
    <SaveButton><ExportIcon /><span>Save &amp; store template</span></SaveButton>
    <VarText>{'Hieronder ziet u een lijst metvariabelen die u\nkunt gebruiken in de samenvoeging. Deze\nvelden worden vervangen door de data uit\nHybrid SaaS. Dubbelklik om het veld toe te\nvoegen aan het document'}</VarText>
    <SearchSet><legend>Zoeken</legend><input aria-label="Zoeken" /></SearchSet>
    <VarList>
      <VarTable>
        <thead><tr><th>Mogelijke variabelen</th><th /></tr></thead>
        <tbody>{variables.map(v => <tr key={v}><td><VarName><VarIcon />{v}</VarName></td><td /></tr>)}</tbody>
      </VarTable>
      <ListScroll><button aria-label="Omhoog schuiven"><ChevronUp /></button></ListScroll>
    </VarList>
  </VarPane>
);

export default function App() {
  return (
    <Desktop>
      <Global />
      <MainWindow />
      <WordWindow>
        <Header />
        <RibbonBar />
        <Workspace>
          <Navigation />
          <Document />
          <Variables />
        </Workspace>
      </WordWindow>
    </Desktop>
  );
}
